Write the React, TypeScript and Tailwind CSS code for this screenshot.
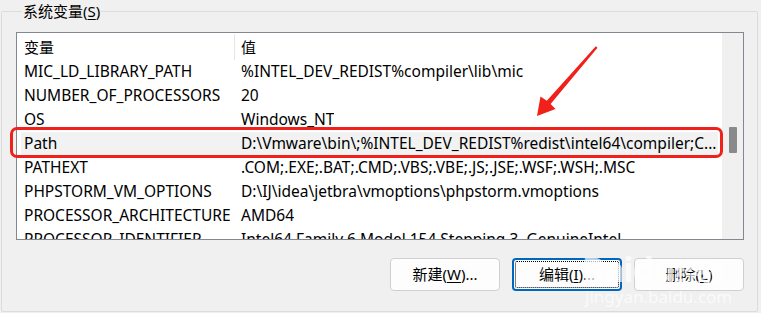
import React from "react";

const rows: { name: string; value: string; selected?: boolean }[] = [
  { name: "MIC_LD_LIBRARY_PATH", value: "%INTEL_DEV_REDIST%compiler\\lib\\mic" },
  { name: "NUMBER_OF_PROCESSORS", value: "20" },
  { name: "OS", value: "Windows_NT" },
  {
    name: "Path",
    value: "D:\\Vmware\\bin\\;%INTEL_DEV_REDIST%redist\\intel64\\compiler;C...",
    selected: true,
  },
  { name: "PATHEXT", value: ".COM;.EXE;.BAT;.CMD;.VBS;.VBE;.JS;.JSE;.WSF;.WSH;.MSC" },
  { name: "PHPSTORM_VM_OPTIONS", value: "D:\\IJ\\idea\\jetbra\\vmoptions\\phpstorm.vmoptions" },
  { name: "PROCESSOR_ARCHITECTURE", value: "AMD64" },
  { name: "PROCESSOR_IDENTIFIER", value: "Intel64 Family 6 Model 154 Stepping 3, GenuineIntel" },
];

const font = { fontFamily: '"Noto Sans", "Noto Sans CJK SC", sans-serif' };

const Button = ({
  label,
  mnemonic,
  tail,
  focused,
}: {
  label: string;
  mnemonic: string;
  tail: string;
  focused?: boolean;
}) => (
  <button
    className={`relative w-[110px] h-[33px] rounded-[4px] bg-[#fdfdfd] text-[15px] text-black flex items-center justify-center ${
      focused ? "border-2 border-[#0067c0]" : "border border-[#d0d0d0]"
    }`}
  >
    {focused && (
      <span className="absolute inset-[1px] border border-dotted border-black rounded-[2px]" />
    )}
    <span>
      {label}(<span className="underline underline-offset-2">{mnemonic}</span>){tail}
    </span>
  </button>
);

export default function App() {
  return (
    <div
      className="relative w-[761px] h-[313px] bg-[#f0f0f0] overflow-hidden text-black"
      style={font}
    >
      <fieldset className="ml-[1px] w-[757px] h-[312px] border border-[#dcdcdc] rounded-[2px] pl-[14px]">
        <legend className="ml-[6px] px-[1px] text-[15px] leading-[22px]">
          系统变量(<span className="underline underline-offset-2">S</span>)
        </legend>

        <div className="mt-[10px] w-[728px] h-[208px] border border-[#828790] bg-white flex overflow-hidden">
          <div className="flex-1 flex flex-col text-[15.5px] min-w-0">
            <div className="flex h-[27px] items-center shrink-0">
              <div className="w-[217px] pl-[7px] pt-[2px] text-[15px]">变量</div>
              <div className="w-px h-[26px] bg-[#e5e5e5] self-start mt-[1px]" />
              <div className="pl-[6px] pt-[2px] text-[15px]">值</div>
            </div>
            {rows.map((r) => (
              <div
                key={r.name}
                className={`flex h-[24px] items-center shrink-0 whitespace-nowrap ${
                  r.selected ? "bg-[#f2f2f2] mx-[4px]" : ""
                }`}
              >
                <div className={`${r.selected ? "w-[213px] pl-[3px]" : "w-[217px] pl-[7px]"} shrink-0`}>
                  {r.name}
                </div>
                <div className="pl-[7px] overflow-hidden">{r.value}</div>
              </div>
            ))}
          </div>
          <div className="w-[21px] h-full bg-[#f0f0f0] flex justify-center shrink-0">
            <div className="w-[8px] h-[26px] mt-[94px] bg-[#8a8a8a] rounded-[1px]" />
          </div>
        </div>

        <div className="mt-[18px] flex justify-end gap-[12px] pr-[13px]">
          <Button label="新建" mnemonic="W" tail="..." />
          <Button label="编辑" mnemonic="I" tail="..." focused />
          <Button label="删除" mnemonic="L" tail="" />
        </div>
      </fieldset>

      {/* red highlight around Path row */}
      <div className="absolute left-[10px] top-[127px] w-[713px] h-[31px] border-[3px] border-[#f0201a] rounded-[7px] pointer-events-none" />

      {/* red arrow */}
      <svg className="absolute left-0 top-0 pointer-events-none" width="761" height="313">
        <polygon
          points="597.5,47.8 550.6,103.9 555.5,109 537,116 540.5,96.5 546.8,100.7 595.8,46.2"
          fill="#f0201a"
        />
      </svg>

      {/* watermark */}
      <div className="absolute left-[582px] top-[252px] text-[34px] leading-[34px] font-bold text-white/70 tracking-tight pointer-events-none">
        Baidu<span className="text-[26px]">经验</span>
      </div>
      <div className="absolute left-[585px] top-[288px] text-[17px] leading-[18px] text-white/70 pointer-events-none">
        jingyan.baidu.com
      </div>
    </div>
  );
}
